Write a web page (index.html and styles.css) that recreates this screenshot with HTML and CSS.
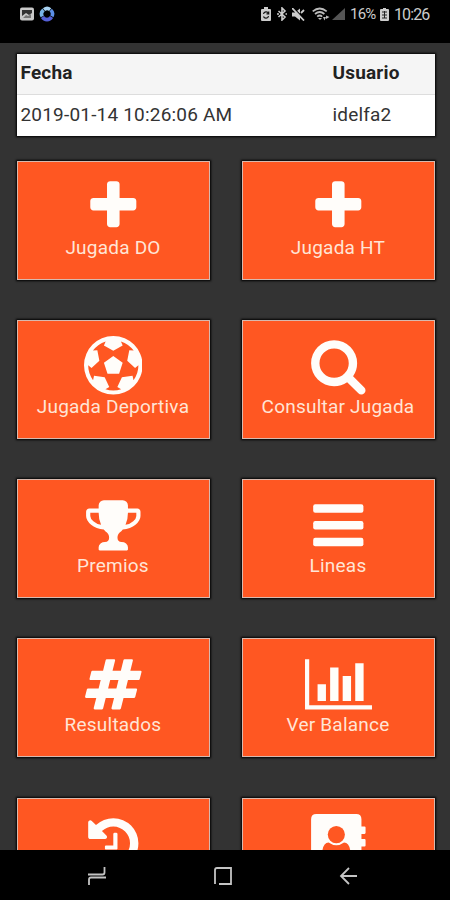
FILE: index.html
```
<!DOCTYPE html>
<html lang="es">
<head>
<meta charset="utf-8">
<title>Jugadas</title>
<link rel="stylesheet" href="styles.css">
</head>
<body>
<header class="status">
  <div class="status-left">
    <svg width="14" height="14" viewBox="0 0 14 14"><rect width="14" height="13" y=".5" rx="2" fill="#c9c9c9"/><path d="M2 3h10v3L9 8 6 6 2 9z" fill="#333"/><path d="M3 11l3-3 2 1 3-2v4z" fill="#777"/></svg>
    <svg width="16" height="16" viewBox="0 0 16 16" fill="none" stroke-width="3.6"><path d="M3.2 10.5A5.2 5.2 0 0 1 4.5 4" stroke="#79b4e8"/><path d="M5 3.6a5.2 5.2 0 0 1 6.2 0" stroke="#a9d3f2"/><path d="M11.7 4a5.2 5.2 0 0 1 1.2 6.3" stroke="#5c8fe6"/><path d="M12.5 11a5.2 5.2 0 0 1-9 0" stroke="#5560d8"/></svg>
  </div>
  <div class="status-right">
    <svg width="10" height="14" viewBox="0 0 10 14"><path d="M3 0h4v2h2q1 0 1 1v10q0 1-1 1H1q-1 0-1-1V3q0-1 1-1h2z" fill="#ccc"/><path d="M2.5 7a2.6 2.6 0 0 1 5-.5M7.500 9a2.600 2.600 0 0 1-5 .5M7.700 4.500v2.300H5.500" fill="none" stroke="#111" stroke-width="1.200"/></svg>
    <svg class="bt" width="10" height="14" viewBox="0 0 10 14" fill="none" stroke="#ccc" stroke-width="1.600"><path d="M1.500 4l6.500 6-3 3V1l3 3-6.500 6M0 7h2M8.500 7h1.500"/></svg>
    <svg class="mute" width="13" height="13" viewBox="0 0 13 13"><path d="M0 4.500h3l5-4v12l-5-4H0z" fill="#ccc"/><path d="M1.500 0l11 11" stroke="#000" stroke-width="1.200"/><path d="M0 0l12 12.500M9 5l3-3" stroke="#ccc" stroke-width="1.800"/></svg>
    <svg class="wifi" width="18" height="14" viewBox="0 0 18 14"><path d="M.7 4.300q7-5.600 14 0M3 7q4.700-4 9.400 0M5.200 9.600q2.500-2.200 5 0" fill="none" stroke="#bbb" stroke-width="1.700"/><path d="M6 11h4l-2 2zM11 10h3l-1.500 3.500zM14 8.500l3.500 1.500-3.500 2z" fill="#bbb"/></svg>
    <svg class="signal" width="13" height="12" viewBox="0 0 13 12"><path d="M13 0v12H0z" fill="#555"/></svg>
    <span class="pct">16%</span>
    <svg class="bat" width="9" height="13" viewBox="0 0 9 13"><path d="M3 0h3v1h2q1 0 1 1v10q0 1-1 1H1q-1 0-1-1V2q0-1 1-1h2z" fill="#ccc"/><path d="M2 4h5M2 7h5M4.500 3v7M2 10h5" stroke="#222"/></svg>
    <span class="clock">10:26</span>
  </div>
</header>
<main class="content">
  <table class="info">
    <thead><tr><th class="date">Fecha</th><th>Usuario</th></tr></thead>
    <tbody><tr><td>2019-01-14 10:26:06 AM</td><td>idelfa2</td></tr></tbody>
  </table>
  <div class="grid">
    <div class="card"><svg class="icon" viewBox="0 0 1792 1792"><path d="M1600 736v192q0 40-28 68t-68 28h-416v416q0 40-28 68t-68 28h-192q-40 0-68-28t-28-68v-416h-416q-40 0-68-28t-28-68v-192q0-40 28-68t68-28h416v-416q0-40 28-68t68-28h192q40 0 68 28t28 68v416h416q40 0 68 28t28 68z"/></svg><span>Jugada DO</span></div>
    <div class="card"><svg class="icon" viewBox="0 0 1792 1792"><path d="M1600 736v192q0 40-28 68t-68 28h-416v416q0 40-28 68t-68 28h-192q-40 0-68-28t-28-68v-416h-416q-40 0-68-28t-28-68v-192q0-40 28-68t68-28h416v-416q0-40 28-68t68-28h192q40 0 68 28t28 68v416h416q40 0 68 28t28 68z"/></svg><span>Jugada HT</span></div>
    <div class="card"><svg class="icon" viewBox="0 0 1792 1792"><path d="M609 816l287-208 287 208-109 336h-355zM896 0q182 0 348 71t286 191 191 286 71 348-71 348-191 286-286 191-348 71-348-71-286-191-191-286-71-348 71-348 191-286 286-191 348-71zm619 1350q149-203 149-454v-3l-102 89-240-224 63-323 134 12q-150-206-389-282l53 124-287 159-287-159 53-124q-239 76-389 282l135-12 62 323-240 224-102-89v3q0 251 149 454l30-132 326 40 139 298-116 69q117 39 240 39t240-39l-116-69 139-298 326-40z"/></svg><span>Jugada Deportiva</span></div>
    <div class="card"><svg class="icon" viewBox="0 0 1792 1792"><path d="M1216 832q0-185-131.500-316.500t-316.500-131.500-316.500 131.500-131.500 316.500 131.500 316.500 316.500 131.500 316.500-131.500 131.500-316.500zm512 832q0 52-38 90t-90 38q-54 0-90-38l-343-342q-179 124-399 124-143 0-273.500-55.500t-225-150-150-225-55.500-273.500 55.500-273.500 150-225 225-150 273.500-55.500 273.500 55.500 225 150 150 225 55.500 273.500q0 220-124 399l343 343q37 37 37 90z"/></svg><span>Consultar Jugada</span></div>
    <div class="card"><svg class="icon" viewBox="0 0 1792 1792"><path d="M522 883q-74-162-74-371h-256v96q0 78 94.500 162t235.500 113zm1078-275v-96h-256q0 209-74 371 141-29 235.500-113t94.500-162zm128-128v128q0 71-41.500 143t-112 130-173 97.500-215.500 44.500q-42 54-95 95-38 34-52.500 72.500t-14.500 89.500q0 54 30.500 91t97.500 37q75 0 133.500 45.500t58.500 114.500v64q0 14-9 23t-23 9h-832q-14 0-23-9t-9-23v-64q0-69 58.500-114.500t133.500-45.500q67 0 97.500-37t30.500-91q0-51-14.500-89.500t-52.500-72.500q-53-41-95-95-113-5-215.500-44.500t-173-97.500-112-130-41.500-143v-128q0-40 28-68t68-28h288v-96q0-66 47-113t113-47h576q66 0 113 47t47 113v96h288q40 0 68 28t28 68z"/></svg><span>Premios</span></div>
    <div class="card"><svg class="icon" viewBox="0 0 1792 1792"><rect x="128" y="256" width="1536" height="256" rx="64"/><rect x="128" y="768" width="1536" height="256" rx="64"/><rect x="128" y="1280" width="1536" height="256" rx="64"/></svg><span>Lineas</span></div>
    <div class="card"><svg class="icon" viewBox="0 0 1792 1792"><path d="M991 1024l64-256h-254l-64 256h254zm768-504l-56 224q-7 24-31 24h-327l-64 256h311q15 0 25 12 10 14 6 28l-56 224q-5 24-31 24h-327l-81 328q-7 24-31 24h-224q-16 0-26-12-9-12-6-28l78-312h-254l-81 328q-7 24-31 24h-225q-15 0-25-12-9-12-6-28l78-312h-311q-15 0-25-12-9-12-6-28l56-224q7-24 31-24h327l64-256h-311q-15 0-25-12-10-14-6-28l56-224q5-24 31-24h327l81-328q7-24 32-24h224q15 0 25 12 9 12 6 28l-78 312h254l81-328q7-24 32-24h224q15 0 25 12 9 12 6 28l-78 312h311q15 0 25 12 9 12 6 28z"/></svg><span>Resultados</span></div>
    <div class="card"><svg class="icon wide" viewBox="0 0 2048 1792"><path d="M2048 1536v128H0V128h128v1408zM384 896h256v512H384zM768 384h256v1024H768zM1152 640h256v768h-256zM1536 256h256v1152h-256z"/></svg><span>Ver Balance</span></div>
    <div class="card"><svg class="icon" viewBox="0 0 1792 1792"><path d="M1664 896q0 156-61 298t-164 245-245 164-298 61q-172 0-327-72.500t-264-204.500q-7-10-6.500-22.500t8.500-20.500l137-138q10-9 25-9 16 2 23 12 73 95 179 147t225 52q104 0 198.500-40.500t163.500-109.500 109.500-163.500 40.500-198.500-40.500-198.500-109.500-163.500-163.500-109.500-198.500-40.500q-98 0-188 35.500t-160 101.500l137 138q31 30 14 69-17 40-59 40h-448q-26 0-45-19t-19-45v-448q0-42 40-59 39-17 69 14l130 129q107-101 244.500-156.500t284.500-55.500q156 0 298 61t245 164 164 245 61 298zm-640-288v448q0 14-9 23t-23 9h-320q-14 0-23-9t-9-23v-64q0-14 9-23t23-9h224v-352q0-14 9-23t23-9h64q14 0 23 9t9 23z"/></svg></div>
    <div class="card"><svg class="icon" viewBox="0 0 1792 1792"><path d="M224 0h1220q160 0 160 160v224h94q32 0 32 32v160q0 32-32 32h-94v160h94q32 0 32 32v160q0 32-32 32h-94v640q0 160-160 160H224q-160 0-160-160V160Q64 0 224 0z"/><g class="cut"><circle cx="836" cy="630" r="262"/><path d="M600 870q236 170 472 0 200 10 200 400 0 100-90 100H490q-90 0-90-100 0-390 200-400z"/></g></svg></div>
  </div>
</main>
<nav class="nav">
  <svg width="20" height="20" viewBox="0 0 20 20"><path d="M1 8.500h14.500q2 0 2-2V1M19 11.500H4q-2 0-2 2V19"/></svg>
  <svg width="20" height="20" viewBox="0 0 20 20"><path d="M6 18H18V2H4Q2 2 2 4V18"/></svg>
  <svg width="20" height="20" viewBox="0 0 20 20"><path d="M10 2L2 10l8 8M2 10h16"/></svg>
</nav>
</body>
</html>
```
FILE: styles.css
```
* { box-sizing: border-box; }
body {
  margin: 0;
  height: 900px;
  display: flex;
  flex-direction: column;
  overflow: hidden;
  background: #333;
  font-family: Roboto, sans-serif;
}
svg { display: block; flex: none; }
.status {
  height: 42.5px;
  flex: none;
  display: flex;
  justify-content: space-between;
  align-items: flex-start;
  padding: 5px 21px 0 20px;
  background: #000;
  color: #ccc;
  font-size: 16px;
}
.status-left, .status-right { display: flex; align-items: center; height: 18px; }
.status-left { gap: 5px; }
.bt { margin-left: 6px; }
.mute { margin-left: 5px; }
.wifi { margin-left: 7px; }
.signal { margin-left: 2px; }
.pct { width: 25px; margin-left: 5px; font-size: 15px; letter-spacing: -.8px; }
.bat { margin-left: 5px; }
.clock { width: 35px; margin-left: 5px; letter-spacing: -.9px; }
.content {
  flex: 1;
  min-height: 0;
  overflow: hidden;
  padding: 11px 15px 0 16.5px;
}
.info {
  width: 418px;
  border-collapse: collapse;
  table-layout: fixed;
  background: #fff;
  color: #333;
  font-size: 19px;
  letter-spacing: .19px;
  box-shadow: 0 0 2px 1px #000;
}
.info th, .info td {
  height: 41px;
  padding: 0 0 0 4px;
  text-align: left;
  line-height: 22px;
}
.info th { padding-bottom: 1px; background: #f5f5f5; color: #222; border-bottom: 1px solid #ddd; }
.date { width: 312px; }
.grid {
  display: grid;
  grid-template-columns: 193px 193px;
  grid-auto-rows: 119px;
  gap: 40.3px 32px;
  margin-top: 25px;
}
.card {
  display: flex;
  flex-direction: column;
  align-items: center;
  padding-top: 15.5px;
  background: #ff5722;
  border: 1px solid #d8b9ae;
  box-shadow: 0 0 2px 1px #000;
  color: #ffe5d6;
  font-size: 19px;
  line-height: 24px;
  letter-spacing: .22px;
  white-space: nowrap;
}
.icon { width: 58.6px; height: 58.6px; fill: #fffdfa; }
.wide { width: 67px; }
.cut { fill: #ff5722; }
.nav {
  height: 50.5px;
  flex: none;
  display: flex;
  align-items: center;
  gap: 106px;
  padding: 2px 0 0 87px;
  background: #000;
}
.nav svg { fill: none; stroke: #c4c4c4; stroke-width: 1.8; }
```
